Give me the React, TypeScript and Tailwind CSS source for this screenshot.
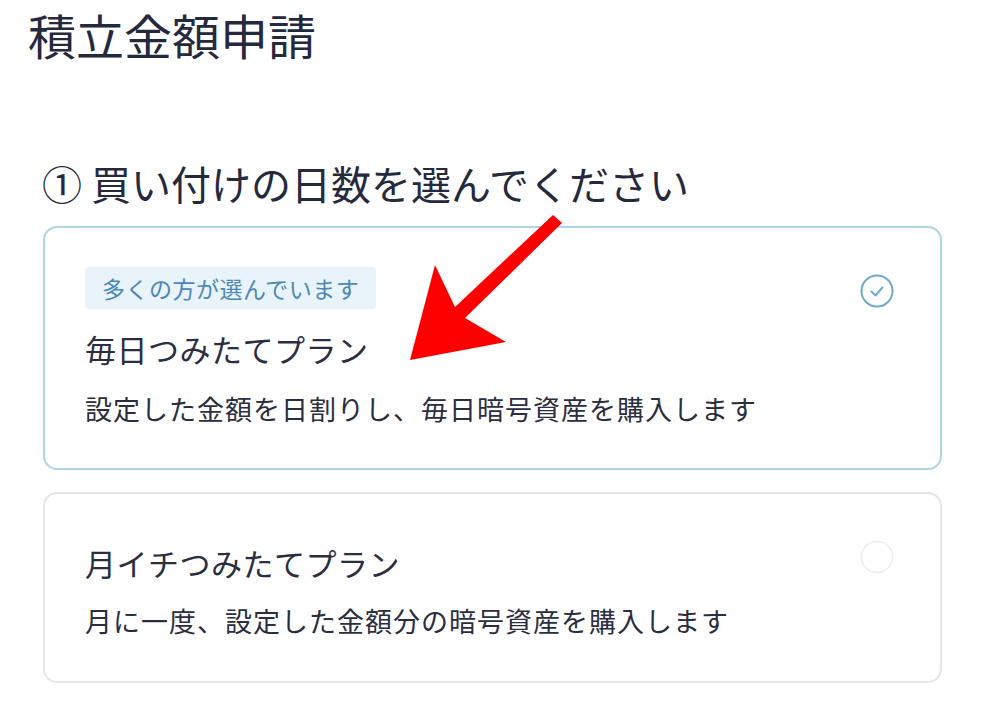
const font = { fontFamily: '"Noto Sans CJK JP", "Noto Sans", sans-serif' };

type Plan = {
  title: string;
  description: string;
  badge?: string;
  selected: boolean;
};

const plans: Plan[] = [
  {
    badge: "多くの方が選んでいます",
    title: "毎日つみたてプラン",
    description: "設定した金額を日割りし、毎日暗号資産を購入します",
    selected: true,
  },
  {
    title: "月イチつみたてプラン",
    description: "月に一度、設定した金額分の暗号資産を購入します",
    selected: false,
  },
];

const CheckCircle = ({ checked }: { checked: boolean }) =>
  checked ? (
    <svg width="34" height="34" viewBox="0 0 34 34" fill="none">
      <circle cx="17" cy="17" r="15.5" stroke="#6fa9ce" strokeWidth="2" />
      <path d="M11.5 17.5l4 4 7-8" stroke="#6fa9ce" strokeWidth="2" strokeLinecap="round" strokeLinejoin="round" />
    </svg>
  ) : (
    <svg width="34" height="34" viewBox="0 0 34 34" fill="none">
      <circle cx="17" cy="17" r="15.5" stroke="#ececec" strokeWidth="1.5" />
    </svg>
  );

const PlanCard = ({ plan }: { plan: Plan }) => (
  <div
    className={`relative rounded-[14px] border-2 bg-white px-[40px] ${
      plan.selected ? "border-[#acd5e8] pt-[39px] pb-[39px]" : "border-[#e6e6e6] pt-[49px] pb-[40px]"
    }`}
  >
    {plan.badge && (
      <div className="mb-[20px] inline-flex h-[42px] items-center rounded-[4px] bg-[#e9f4fa] px-[17px] text-[23px] tracking-[0.5px] text-[#4d88b6]">
        {plan.badge}
      </div>
    )}
    <div className="text-[31px] leading-[40px] tracking-[0.5px] text-[#2a2e40]">{plan.title}</div>
    <div
      className={`text-[27px] leading-[40px] tracking-[1px] text-[#2a2e40] ${
        plan.selected ? "mt-[20px]" : "mt-[18px]"
      }`}
    >
      {plan.description}
    </div>
    <div className="absolute right-[46px] top-[46px]">
      <CheckCircle checked={plan.selected} />
    </div>
  </div>
);

export default function App() {
  return (
    <div className="relative h-[716px] w-[996px] overflow-hidden bg-white" style={font}>
      <h1 className="pl-[28px] pt-[4px] text-[48px] font-normal leading-[60px] text-[#25293d]">積立金額申請</h1>

      <div className="px-[42px] pt-[96px]">
        <h2 className="text-[40px] font-normal leading-[46px] text-[#25293d]">① 買い付けの日数を選んでください</h2>

        <div className="mt-[20px] flex flex-col gap-[22px] pl-px pr-[12px]">
          {plans.map((p) => (
            <PlanCard key={p.title} plan={p} />
          ))}
        </div>
      </div>

      <svg className="pointer-events-none absolute inset-0" width="996" height="716" viewBox="0 0 996 716">
        <polygon
          points="410,360 435,265 455,307 553,215 562,223 465,318 506,342"
          fill="#ff0000"
        />
      </svg>
    </div>
  );
}
